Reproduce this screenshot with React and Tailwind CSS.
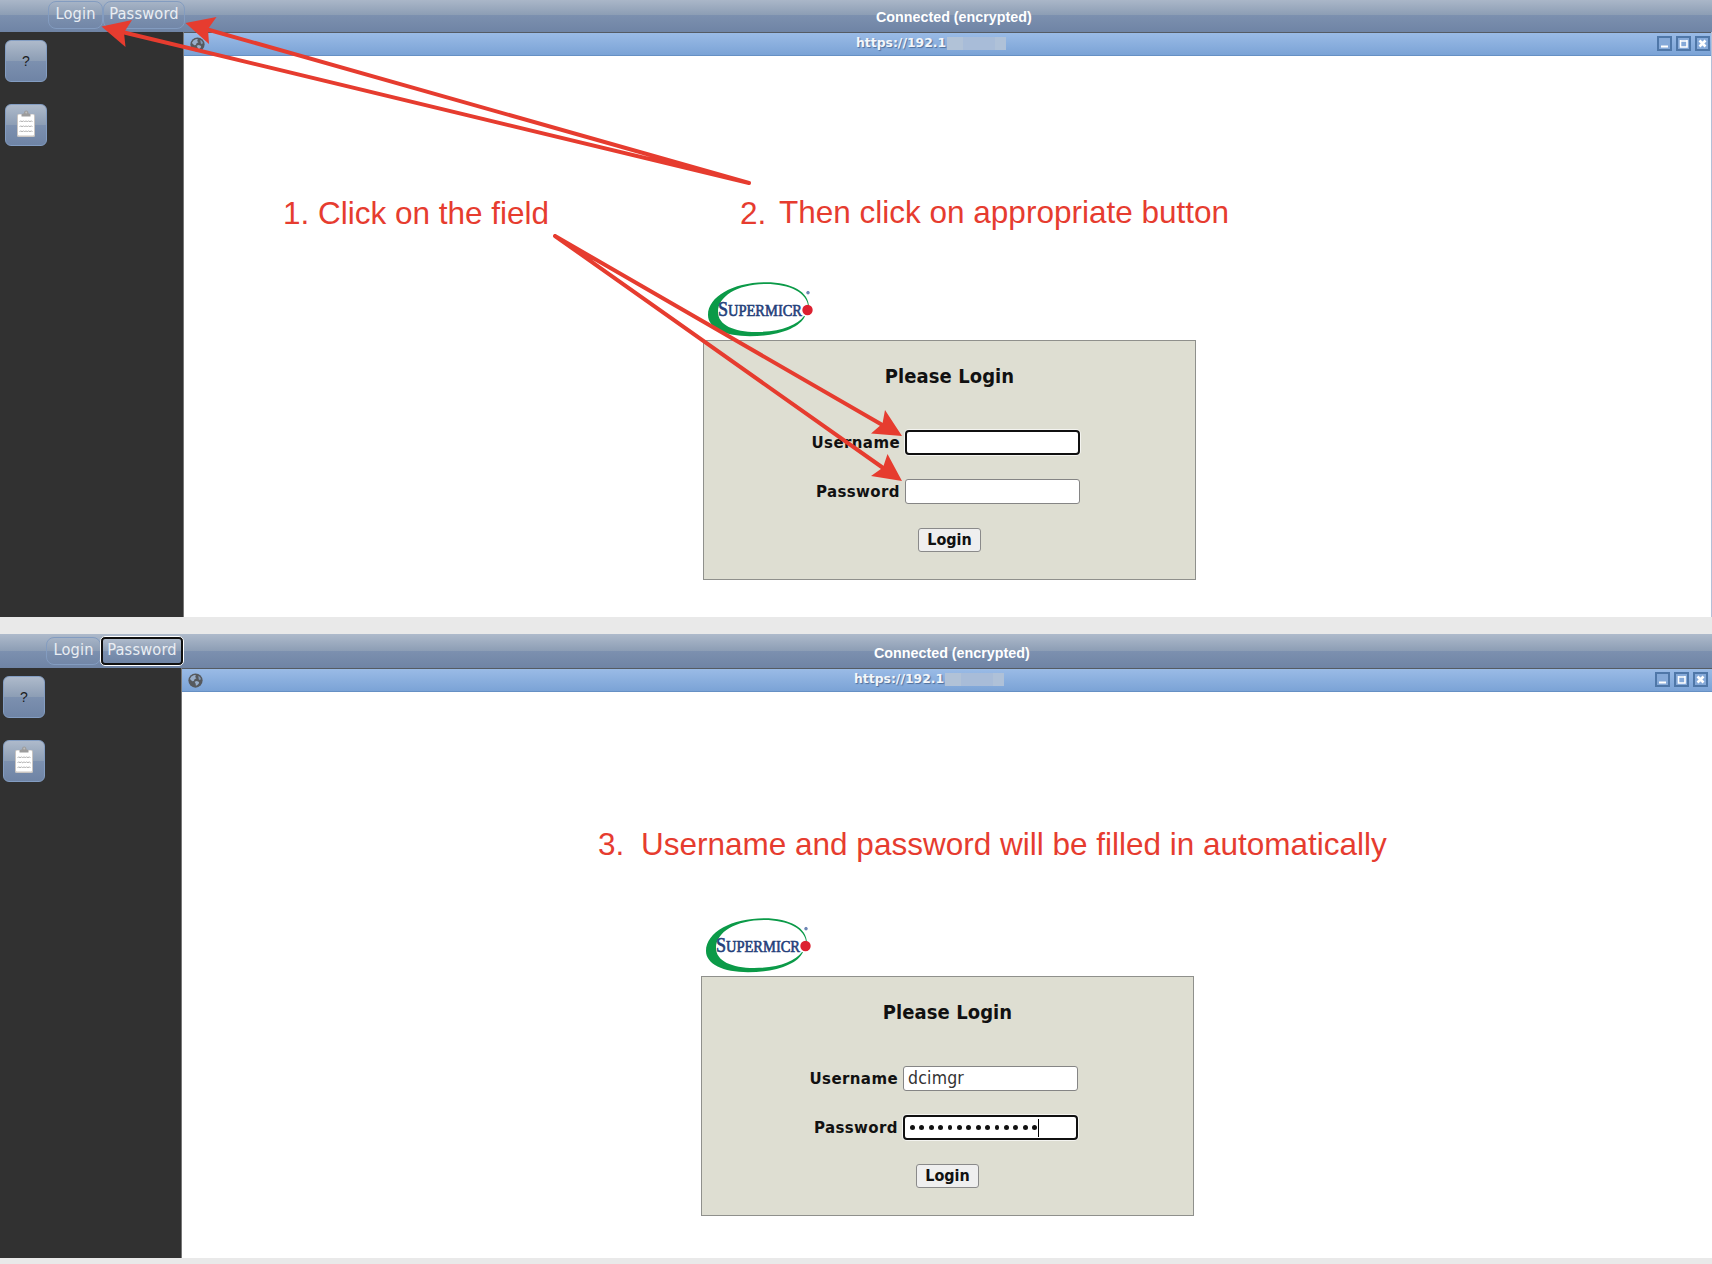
const DEJAVU = "font-['DejaVu_Sans_Condensed','DejaVu_Sans',sans-serif] font-stretch-semi-condensed";
const GLOSS =
  "bg-[linear-gradient(to_bottom,#aebacb_0%,#8d9eb5_49%,#7c90af_51%,#6f84a5_100%)]";

function Globe() {
  return (
    <svg viewBox="0 0 16 16" className="h-[15px] w-[15px]">
      <circle cx="8" cy="8" r="7.6" fill="#56595d" />
      <path d="M2 6.500 3.600 3.600 6.500 2 8.500 2.400 7.600 4.200 9 5.600 7 6.600 6.200 8.400 4.400 8.800 3.200 7.400Z" fill="#98adc8" />
      <path d="M7 9.400 9.400 8.600 11.800 9.600 11.400 11.400 9.600 13 8.400 13.600 8.200 11.400Z" fill="#98adc8" />
      <path d="M11 2.800 12.800 4.200 13.800 6.400 12.600 7.600 11.400 6.600Z" fill="#8398b3" />
    </svg>
  );
}

function Clipboard() {
  return (
    <svg viewBox="0 0 20 28" className="mb-[2px] h-7 w-5">
      <rect x="1" y="4" width="18" height="23" rx="1.5" fill="#c9c5c2" />
      <rect x="2" y="4.5" width="16" height="21" rx="1" fill="#fff" />
      <path d="M5.5 6.5V4.2L8 3.2C8 1.4 8.8.6 10.2.6S12.4 1.4 12.4 3.2L14.5 4.2V6.5Z" fill="#9c9c9c" />
      <circle cx="10.2" cy="2.6" r="1" fill="#bdbdbd" />
      <g fill="none" stroke="#a9a9a9" strokeWidth="0.9">
        <path d="M3.5 12l1.3-1.300 1.3 1.300 1.3-1.300 1.3 1.300 1.3-1.300 1.3 1.300 1.3-1.300 1.3 1.300 1.3-1.300 1.3 1.300" />
        <path d="M3.5 17l1.3-1.300 1.3 1.300 1.3-1.300 1.3 1.300 1.3-1.300 1.3 1.300 1.3-1.300 1.3 1.300 1.3-1.300 1.3 1.300" />
        <path d="M3.5 22l1.3-1.300 1.3 1.300 1.3-1.300 1.3 1.300 1.3-1.300 1.3 1.300 1.3-1.300 1.3 1.300 1.3-1.300 1.3 1.300" />
      </g>
    </svg>
  );
}

function Logo() {
  return (
    <svg viewBox="0 0 106 55" className="ml-[5px] block h-[55px] w-[106px]">
      <path
        fillRule="evenodd"
        fill="#0b9a48"
        d="M101 25C101 10 84 .2 58 .2 26 .2 0 14 0 33 0 46 17 54.200 42 54.200 70 54.200 92 46 97 34L96 34C89 43.500 72 50 48 50 26 50 10 43 10 30 10 14 30 2 58 2 82 2 99.500 11 100.300 25Z"
      />
      <text
        x="10"
        y="33.500"
        fill="#24407a"
        stroke="#24407a"
        strokeWidth="0.6"
        textLength="84"
        lengthAdjust="spacingAndGlyphs"
        className="font-['Liberation_Serif',serif] text-[16px]"
      >
        <tspan className="text-[20px]">S</tspan>UPERMICR
      </text>
      <circle cx="99.500" cy="28" r="5.200" fill="#dc2130" />
      <circle cx="100" cy="10.700" r="1.400" fill="#7089b8" stroke="#5a74a8" strokeWidth="0.600" />
    </svg>
  );
}

function WindowButton({ children }) {
  return (
    <span className="flex h-[15px] w-[15px] items-center justify-center border-2 border-[#4f77a8] bg-[#85a9d8]">
      <svg viewBox="0 0 11 11" className="h-[11px] w-[11px]" fill="none" stroke="#fff">
        {children}
      </svg>
    </span>
  );
}

function ToolButton({ children }) {
  return (
    <button
      className={`flex h-[42px] w-[42px] items-center justify-center rounded-[6px] border border-[#839dc2] ${GLOSS}`}
    >
      {children}
    </button>
  );
}

function Field({ label, focused, children }) {
  return (
    <div className="flex h-[25px] items-center">
      <span className="mr-[5px] w-[196px] pt-[2px] text-right font-['DejaVu_Sans',sans-serif] text-[15px] leading-[25px] font-bold tracking-[0.4px] text-[#111]">
        {label}
      </span>
      <span
        className={`flex h-[25px] w-[175px] items-center bg-white pl-1 ${
          focused
            ? "rounded-[4px] border-2 border-[#101010] shadow-[0_0_0_1px_#f4f4f0]"
            : "rounded-[3px] border border-[#858585]"
        }`}
      >
        {children}
      </span>
    </div>
  );
}

function Screen({ filled }) {
  return (
    <div className={`flex h-[624px] shrink-0 flex-col bg-white ${filled ? "-ml-[2px] w-[1714px]" : "-mt-[2px] w-[1712px]"}`}>
      <header className={`flex h-[34px] shrink-0 ${GLOSS}`}>
        <div className={`flex w-[190px] pt-[3px] pl-12 text-[16.300px] leading-[24px] tracking-[0.15px] text-[#e9edf3] ${DEJAVU}`}>
          <button className="h-7 w-[55px] rounded-[8px] border border-[#839cc0] pb-1">Login</button>
          {filled ? (
            <button className="-mt-[1px] -ml-px h-[30px] w-[84px] rounded-[5px] border border-white bg-[#101010] p-[2px]">
              <span className={`flex h-6 items-center justify-center rounded-[2px] pb-[2px] ${GLOSS}`}>Password</span>
            </button>
          ) : (
            <button className="h-7 w-[82px] rounded-[8px] border border-[#839cc0] pb-1">Password</button>
          )}
        </div>
        <div className="flex-1 pl-[686px] font-['Liberation_Sans',sans-serif] text-[14.300px] leading-[38px] font-bold whitespace-nowrap text-white">
          Connected (encrypted)
        </div>
      </header>
      <div className="flex flex-1">
        <aside className="flex w-[184px] shrink-0 flex-col gap-[22px] border-r border-[#777] bg-[#313131] pt-2 pl-[5px]">
          <ToolButton>
            <span className="font-['Liberation_Sans',sans-serif] text-[14px] text-[#1c1c1c]">?</span>
          </ToolButton>
          <ToolButton>
            <Clipboard />
          </ToolButton>
        </aside>
        <main className={`flex-1 ${filled ? "" : "border-r border-[#b4c0d8]"}`}>
          <div className="flex h-6 items-center border-t border-b border-t-[#555b63] border-b-[#6690c4] bg-[linear-gradient(to_bottom,#9abbe6,#7ba3d6)] pl-[6px]">
            <Globe />
            <div className="ml-[651px] flex items-center font-['DejaVu_Sans',sans-serif] text-[12.400px] font-bold text-[#f3f6fa] [text-shadow:1px_1px_1px_#4f6f9b]">
              <span className="w-[91px] pb-[1px] whitespace-nowrap">https://192.1</span>
              <span className="flex h-[13px] w-[59px] bg-[#a8bcd8]">
                <span className="h-full w-4 bg-[#b1c2d7]" />
                <span className="ml-8 h-full w-[11px] bg-[#afc1d8]" />
              </span>
            </div>
            <div className={`ml-auto flex gap-1 pb-px ${filled ? "pr-1" : "pr-px"}`}>
              <WindowButton>
                <path d="M2 8.500h7" strokeWidth="2" />
              </WindowButton>
              <WindowButton>
                <path d="M2.500 2v7h6.500V2M1.800 3h8" strokeWidth="1.600" />
              </WindowButton>
              <WindowButton>
                <path d="M2.500 2.500l6 6M8.500 2.500l-6 6" strokeWidth="2.600" />
              </WindowButton>
            </div>
          </div>
          <div className="ml-[519px] w-[493px] pt-[226px]">
            <Logo />
            <section className="mt-[3px] h-[240px] border border-[#8f908c] bg-[#deded2]">
              <h1 className={`pt-[21px] text-center text-[20px] leading-7 font-bold tracking-[0.08px] text-[#111] ${DEJAVU}`}>Please Login</h1>
              <div className="mt-10 flex flex-col gap-6">
                <Field label="Username" focused={!filled}>
                  {filled && <span className={`text-[17.500px] leading-none tracking-[0.2px] text-[#333] ${DEJAVU}`}>dcimgr</span>}
                </Field>
                <Field label="Password" focused={filled}>
                  {filled && (
                    <span className="flex items-center gap-[4.500px] pl-px">
                      {Array.from({ length: 14 }, (_, i) => (
                        <span key={i} className="h-[4.900px] w-[4.900px] shrink-0 rounded-full bg-[#111]" />
                      ))}
                      <span className="-ml-[3px] h-[18px] w-px shrink-0 bg-black" />
                    </span>
                  )}
                </Field>
              </div>
              <button
                className={`mx-auto mt-6 flex h-6 w-[63px] items-center justify-center rounded-[3px] border border-[#8a8a8a] bg-[#efefef] text-[16px] font-bold text-[#111] ${DEJAVU}`}
              >
                Login
              </button>
            </section>
          </div>
        </main>
      </div>
    </div>
  );
}

function Note({ className, children }) {
  return (
    <p
      className={`absolute font-['Liberation_Sans',sans-serif] text-[31.500px] leading-9 whitespace-pre text-[#e63c2f] ${className}`}
    >
      {children}
    </p>
  );
}

function Arrows() {
  return (
    <svg viewBox="0 0 1712 618" className="absolute top-0 left-0 h-[618px] w-[1712px]" fill="#e63c2f">
      <g stroke="#e63c2f" strokeWidth="4" strokeLinecap="round">
        <path d="M749 183 120 31.500M749 183 204 28.500M555 236 885 426.500M555 236 886 470" />
      </g>
      <path d="M101.500 26.500 132 20 124 32.500 125.500 47Z" />
      <path d="M185.500 23 216.500 17 208 29 209 44Z" />
      <path d="M902 436 885 410 882.500 423.500 871 433.500Z" />
      <path d="M902 481 887.500 454 883 467.500 871 476Z" />
    </svg>
  );
}

export default function App() {
  return (
    <div className="relative h-[1264px] w-[1712px] overflow-hidden bg-[#e9e9e9]">
      <div className="h-[617px] overflow-hidden">
        <Screen />
      </div>
      <div className="mt-[17px] h-[624px] overflow-hidden">
        <Screen filled />
      </div>
      <Arrows />
      <Note className="top-[195px] left-[283px]">1. Click on the field</Note>
      <Note className="top-[195px] left-[740px]">2.</Note>
      <Note className="top-[194px] left-[779px]">Then click on appropriate button</Note>
      <Note className="top-[826px] left-[598px]">3.</Note>
      <Note className="top-[826px] left-[641px]">Username and password will be filled in automatically</Note>
    </div>
  );
}
